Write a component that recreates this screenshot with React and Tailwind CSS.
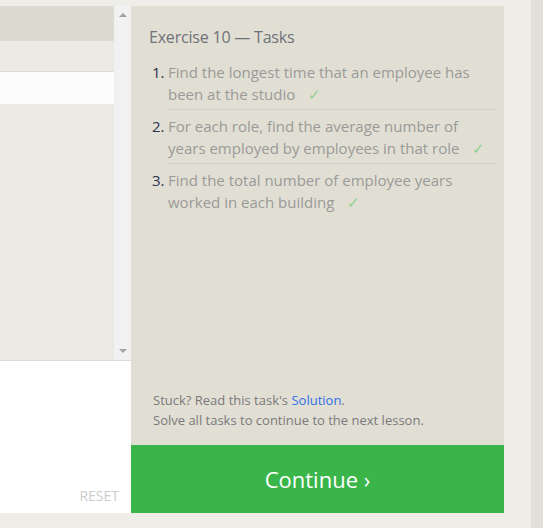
import React from 'react';

const tasks = [
  ['Find the longest time that an employee has', 'been at the studio'],
  ['For each role, find the average number of', 'years employed by employees in that role'],
  ['Find the total number of employee years', 'worked in each building'],
];

const font = { fontFamily: '"Open Sans", "Noto Sans", sans-serif' };

const App = () => {
  return (
    <div className="flex w-[543px] h-[528px] bg-[#efede7] overflow-hidden" style={font}>
      <div className="flex flex-col w-[531px] pt-[6px]">
        <div className="flex">
          {/* editor / results column */}
          <div className="flex flex-col w-[131px]">
            <div className="flex h-[355px] border-b border-[#dcdbd4]">
              <div className="flex flex-col w-[114px] bg-[#eae9e3]">
                <div className="h-[35px] bg-[#dcdbd1]" />
                <div className="h-[31px] bg-[#ebeae4] border-b border-[#dddcd6]" />
                <div className="h-[32px] bg-[#fcfcfc]" />
              </div>
              <div className="flex flex-col justify-between items-center w-[17px] bg-[#f1f1f1] py-[7px]">
                <span className="w-0 h-0 border-x-[4px] border-x-transparent border-b-[4px] border-b-[#a3a3a3]" />
                <span className="w-0 h-0 border-x-[4px] border-x-transparent border-t-[4px] border-t-[#a3a3a3]" />
              </div>
            </div>
            <div className="flex flex-col justify-end items-end h-[152px] bg-white pr-[12px] pb-[7px]">
              <span className="text-[14px] text-[#cccccc]">RESET</span>
            </div>
          </div>

          {/* task panel */}
          <div className="flex flex-col w-[373px]">
            <div className="flex flex-col h-[439px] bg-[#e1dfd4] pl-[18px] pr-[8px] pt-[19px]">
              <h2 className="text-[16px] leading-[24px] text-[#6f7178] tracking-[-0.2px]">Exercise 10 — Tasks</h2>
              <ol className="mt-[7px]">
                {tasks.map((t, i) => (
                  <li key={i} className="flex pt-[5px]">
                    <span className="w-[19px] pl-[3px] text-[15px] leading-[22px] text-[#2c3050] shrink-0">{i + 1}.</span>
                    <div className={`flex-1 text-[15px] leading-[22px] text-[#9a9a98] pb-[4px] ${i < tasks.length - 1 ? 'border-b border-[#d3d1c6]' : ''}`}>
                      <div>{t[0]}</div>
                      <div>
                        {t[1]}
                        <span className="ml-[13px] text-[#8fd18f]">✓</span>
                      </div>
                    </div>
                  </li>
                ))}
              </ol>
              <div className="mt-auto pl-[4px] pb-[15px] text-[13px] leading-[20px] text-[#7b797c]">
                <p>
                  Stuck? Read this task's <span className="text-[#2f6fe8]">Solution</span>.
                </p>
                <p>Solve all tasks to continue to the next lesson.</p>
              </div>
            </div>
            <button className="flex items-center justify-center h-[68px] bg-[#3ab54a] text-white text-[22px]">
              Continue ›
            </button>
          </div>
        </div>
      </div>
      <div className="w-[12px] h-full bg-[#e3e0dc]" />
    </div>
  );
};

export default App;
